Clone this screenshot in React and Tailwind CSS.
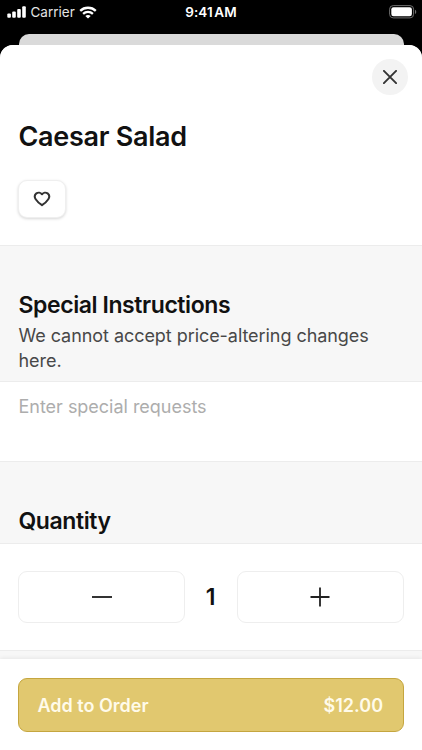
import React, { useState } from 'react';

const SignalIcon = () => (
    <svg width="19" height="12" viewBox="0 0 19 12" fill="currentColor">
        <rect x="0.3" y="7.6" width="3.6" height="4.2" rx="1" />
        <rect x="5.200" y="5.6" width="3.6" height="6.2" rx="1" />
        <rect x="10.200" y="3" width="3.6" height="8.8" rx="1" />
        <rect x="15.200" y="0.2" width="3.6" height="11.6" rx="1" />
    </svg>
);

const WifiIcon = () => (
    <svg width="18" height="13" viewBox="0 0 18 13" fill="none" stroke="currentColor" strokeWidth="2.3">
        <path d="M1.2 4.9C5.5 0.7 12.5 0.7 16.8 4.9" />
        <path d="M4.1 7.9c2.8-2.6 7-2.6 9.8 0" />
        <path d="M9 12.6 6.3 9.9c1.5-1.3 3.9-1.3 5.4 0Z" fill="currentColor" stroke="none" />
    </svg>
);

const BatteryIcon = () => (
    <svg width="28" height="14" viewBox="0 0 28 14" fill="none">
        <rect x="0.6" y="0.6" width="24" height="12.3" rx="3.6" stroke="#6f6f6f" strokeWidth="1" />
        <rect x="2.3" y="2.2" width="20.6" height="9.1" rx="2.2" fill="#fff" />
        <path d="M26 4.8v4.2c1.7-.6 1.7-3.6 0-4.2Z" fill="#6f6f6f" />
    </svg>
);

const HeartIcon = () => (
    <svg width="18" height="16" viewBox="0 0 18 16" fill="none" stroke="currentColor" strokeWidth="2" strokeLinejoin="round">
        <path d="M9 3.300C7.600 1.500 5.100 1.100 3.400 2.400 1.600 3.800 1.400 6.200 2.700 8.200 4 10.200 6.300 12.400 9 14.200c2.700-1.800 5-4 6.300-6C16.600 6.200 16.400 3.800 14.600 2.400 12.900 1.100 10.400 1.500 9 3.300Z" />
    </svg>
);

const StatusBar = () => (
    <div className="flex h-[34px] items-start justify-between text-white">
        <div className="flex w-[150px] items-center pt-[3px] pl-[7px]">
            <SignalIcon />
            <span className="ml-[4.500px] text-[13.5px] leading-[18px] text-[#e4e4e4]">Carrier</span>
            <span className="ml-[4.500px]"><WifiIcon /></span>
        </div>
        <span className="pt-[3px] text-[13.5px] leading-[18px] font-semibold tracking-[0.1px] [word-spacing:-2px]">9:41 AM</span>
        <div className="flex w-[150px] justify-end pt-[5px] pr-[5.500px]">
            <BatteryIcon />
        </div>
    </div>
);

const SectionHeading = ({ children }) => (
    <h2 className="text-[23px] leading-[29px] font-semibold tracking-[-0.42px] text-[#111]">{children}</h2>
);

const App = () => {
    const [quantity, setQuantity] = useState(1);
    const price = 12;

    return (
        <div className="flex h-[750px] w-[422px] flex-col overflow-hidden bg-black font-['Inter',sans-serif]">
            <StatusBar />
            {/* Edge of the card behind the sheet */}
            <div className="mx-[18.5px] h-[11px] shrink-0 rounded-t-[10px] bg-[#dadada]" />

            <main className="flex flex-1 flex-col overflow-hidden rounded-t-[13px] bg-[#f7f7f7]">
                <header className="h-[201px] shrink-0 border-b border-[#ececec] bg-white px-[18px] pt-[14px]">
                    <div className="-mr-[4px] flex justify-end">
                        <button aria-label="Close" className="flex size-[36px] items-center justify-center rounded-full bg-[#f3f3f3] text-[#333]">
                            <svg width="14" height="14" viewBox="0 0 14 14" stroke="currentColor" strokeWidth="1.9" strokeLinecap="round">
                                <path d="M0.900 0.900 13.100 13.100M13.100 0.900 0.900 13.100" />
                            </svg>
                        </button>
                    </div>
                    <h1 className="mt-[24px] pl-[0.500px] text-[27px] leading-[35px] font-semibold tracking-[-0.28px] text-[#111]">Caesar Salad</h1>
                    <button aria-label="Favorite" className="mt-[26px] flex h-[38px] w-[48px] items-center justify-center rounded-[9px] border border-[#efefef] bg-white text-[#333] shadow-[0_1px_3px_rgba(0,0,0,0.16)]">
                        <HeartIcon />
                    </button>
                </header>

                <section className="h-[136px] shrink-0 border-b border-[#ececec] px-[18.500px] pt-[45px]">
                    <SectionHeading>Special Instructions</SectionHeading>
                    <p className="mt-[3px] text-[18px] leading-[25px] tracking-[-0.055px] text-[#484848]">We cannot accept price-altering changes here.</p>
                </section>
                <textarea
                    placeholder="Enter special requests"
                    className="block h-[80px] w-full shrink-0 resize-none border-b border-[#ececec] bg-white px-[18.500px] pt-[12px] text-[18px] leading-[25px] tracking-[-0.02px] outline-none placeholder:text-[#adadad]"
                />

                <section className="h-[82px] shrink-0 border-b border-[#ececec] px-[18.500px] pt-[45px]">
                    <SectionHeading>Quantity</SectionHeading>
                </section>
                <div className="flex h-[107px] shrink-0 items-start border-b border-[#ececec] bg-white px-[18px] pt-[27px]">
                    <button
                        aria-label="Decrease"
                        onClick={() => setQuantity(Math.max(1, quantity - 1))}
                        className="flex h-[52px] w-[167px] items-center justify-center rounded-[9px] border border-[#eee] text-[#333]"
                    >
                        <span className="h-[2px] w-[20px] bg-current" />
                    </button>
                    <span className="flex h-[52px] flex-1 items-center justify-center pr-[1px] text-[23px] font-semibold text-[#111]">{quantity}</span>
                    <button
                        aria-label="Increase"
                        onClick={() => setQuantity(quantity + 1)}
                        className="flex h-[52px] w-[167px] items-center justify-center rounded-[9px] border border-[#eee] pr-[1px] text-[#222]"
                    >
                        <svg width="20" height="20" viewBox="0 0 20 20" stroke="currentColor" strokeWidth="1.8">
                            <path d="M10 0.500v19M0.500 10h19" />
                        </svg>
                    </button>
                </div>

                <footer className="mt-auto h-[91px] shrink-0 bg-white px-[18px] pt-[19px] shadow-[0_-1px_4px_rgba(0,0,0,0.07)]">
                    <button className="flex h-[54px] w-full items-center justify-between rounded-[9px] border border-[#c5a63f] bg-[#e1c86f] pr-[20px] pl-[18.500px] text-[18px] font-semibold text-[#fffbea]">
                        <span>Add to Order</span>
                        <span>${(price * quantity).toFixed(2)}</span>
                    </button>
                </footer>
            </main>
        </div>
    );
};

export default App;
